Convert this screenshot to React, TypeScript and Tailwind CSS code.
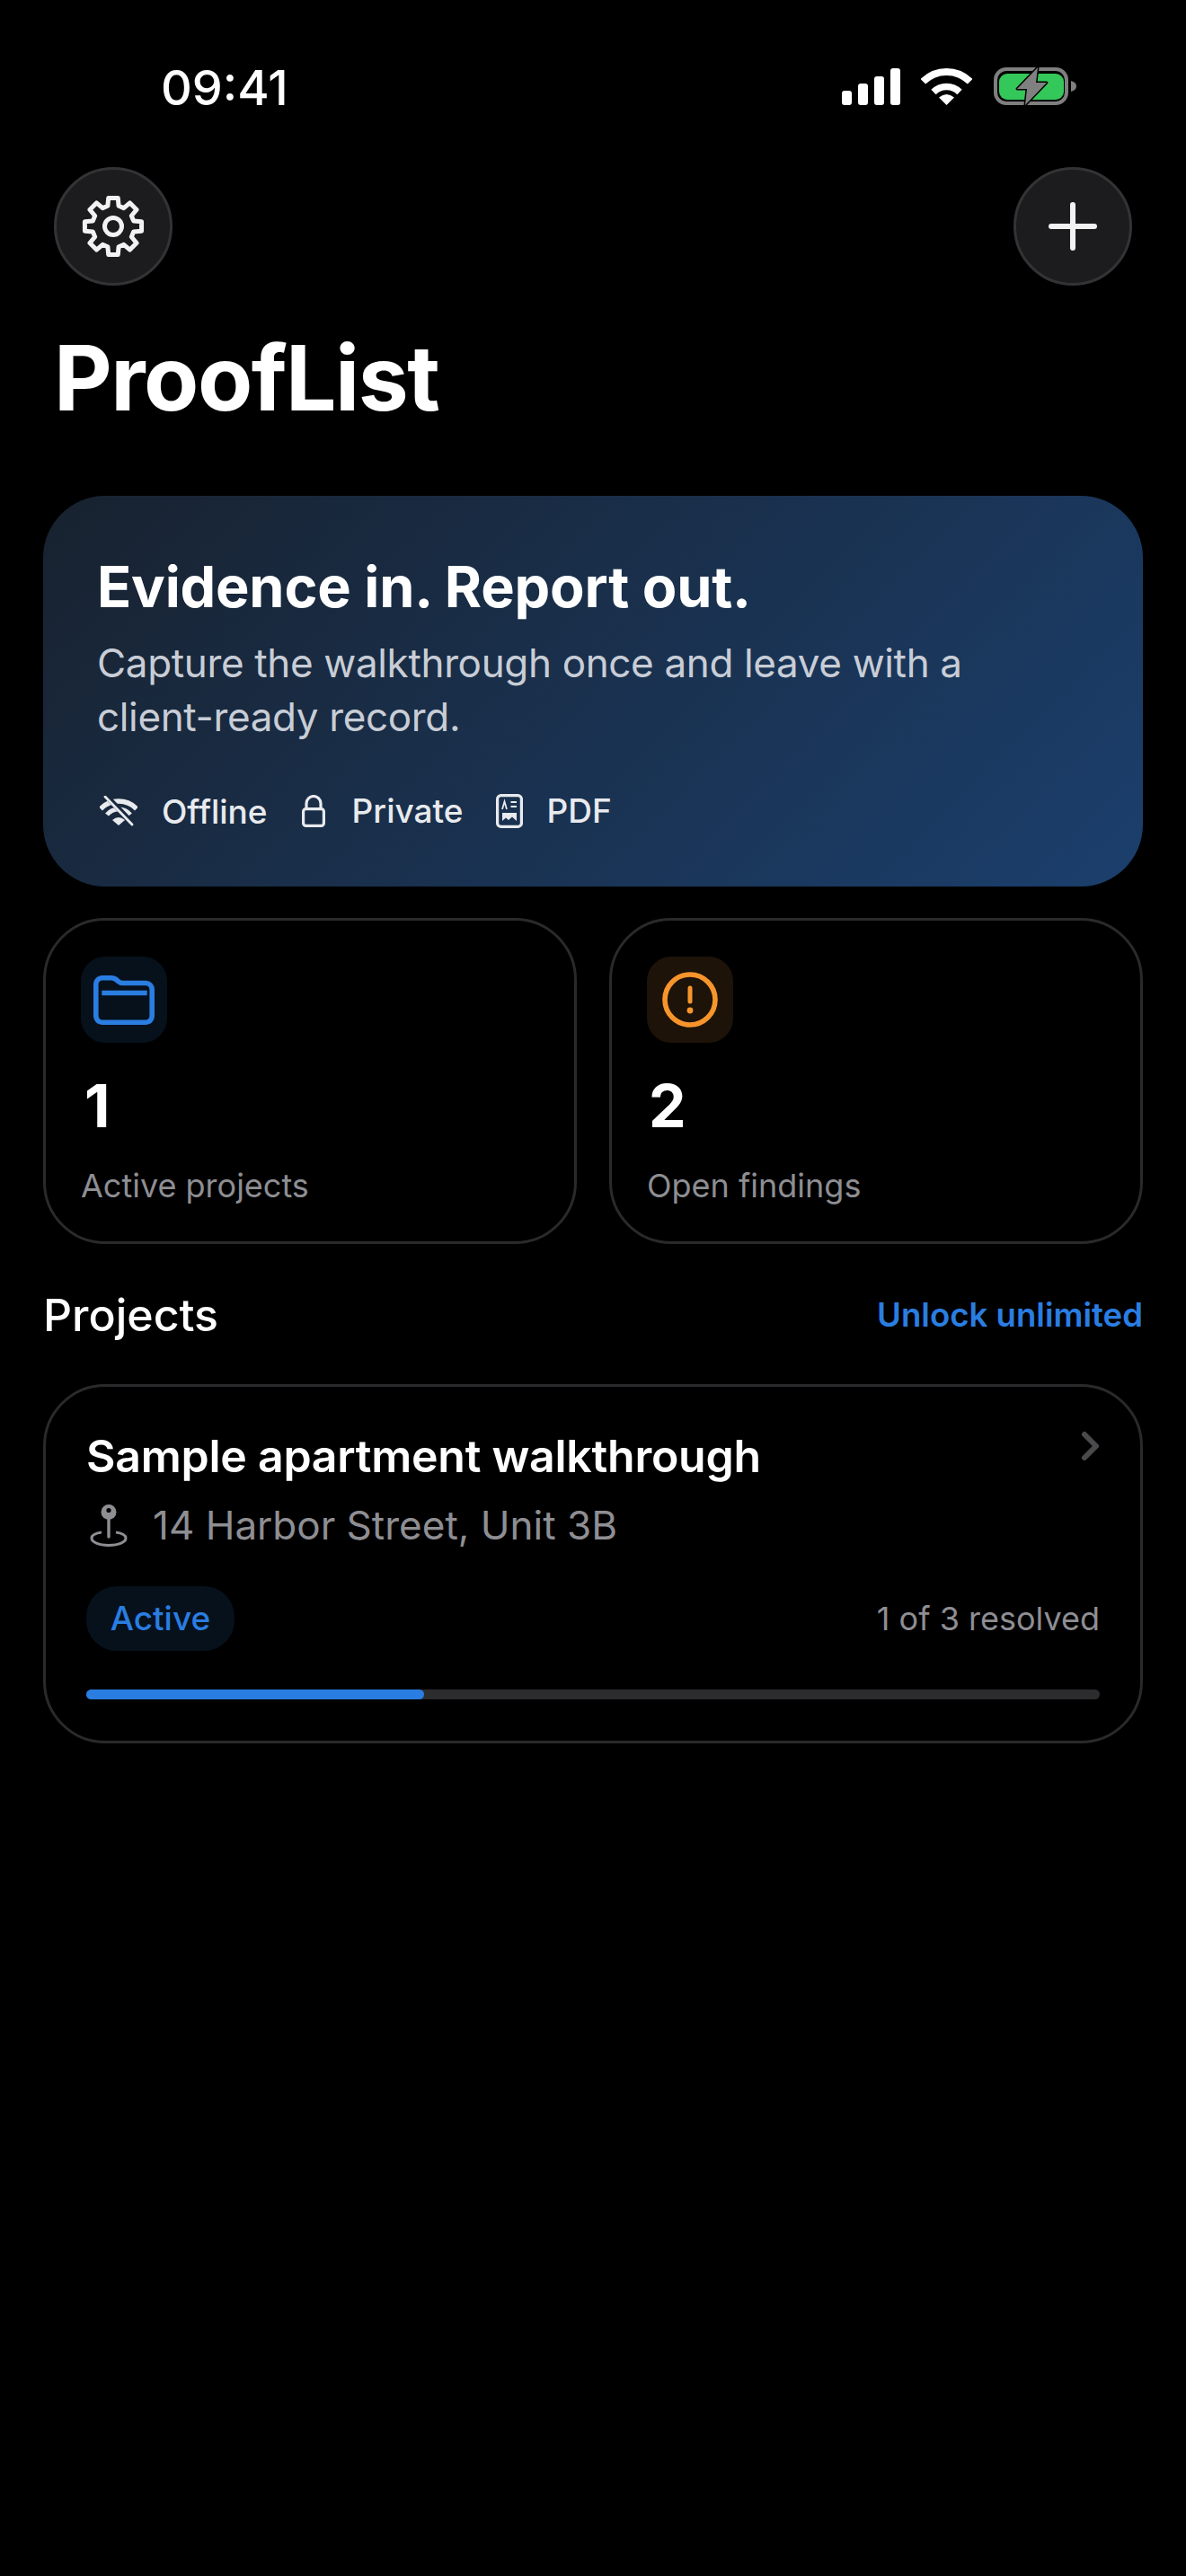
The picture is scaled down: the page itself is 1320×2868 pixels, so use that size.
import React from "react";

const font = { fontFamily: "Inter, 'Liberation Sans', sans-serif" };

function gearPath() {
  const cx = 36;
  const cy = 36;
  const pts: string[] = [];
  for (let i = 0; i < 8; i++) {
    const a = (i * Math.PI) / 4 - Math.PI / 2;
    const d = (r: number, t: number) => {
      const x = cx + r * Math.cos(a + (t * Math.PI) / 180);
      const y = cy + r * Math.sin(a + (t * Math.PI) / 180);
      return `${x.toFixed(2)} ${y.toFixed(2)}`;
    };
    pts.push(d(23.5, -15), d(32, -9.5), d(32, 9.5), d(23.5, 15));
  }
  return `M${pts.join("L")}Z`;
}

function Gear() {
  return (
    <svg width="72" height="72" viewBox="0 0 72 72" fill="none" stroke="#f2f2f2" strokeWidth="5" strokeLinejoin="round">
      <path d={gearPath()} />
      <circle cx="36" cy="36" r="9.5" />
    </svg>
  );
}

function StatusIcons() {
  return (
    <div className="flex items-center">
      <svg width="65" height="41" viewBox="0 0 65 41" fill="#fff">
        <rect x="0" y="25" width="11" height="16" rx="3" />
        <rect x="18" y="17" width="11" height="24" rx="3" />
        <rect x="36" y="9" width="11" height="32" rx="3" />
        <rect x="54" y="0" width="11" height="41" rx="3" />
      </svg>
      <svg className="ml-[23px]" width="57" height="42" viewBox="0 0 57 42" fill="none" stroke="#fff">
        <path d="M2.3 15.8A37 37 0 0 1 54.7 15.8" strokeWidth="8" />
        <path d="M14 27.5A20.5 20.5 0 0 1 43 27.5" strokeWidth="7.5" />
        <path d="M28.5 42L20 33.5Q28.5 26.5 37 33.5Z" fill="#fff" stroke="none" />
      </svg>
      <svg className="ml-[24px]" width="92" height="46" viewBox="0 -2 92 46" fill="none">
        <rect x="2" y="2" width="79" height="38" rx="12" stroke="#7f7f7f" strokeWidth="4" />
        <rect x="6" y="7" width="72" height="29" rx="9" fill="#34c759" />
        <path d="M86 15C90 16 92 18 92 21C92 24 90 26 86 27Z" fill="#7f7f7f" />
        <path d="M49 0L26 24H37L35 42L59 17H47Z" fill="#808080" stroke="#000" strokeWidth="3" strokeLinejoin="round" paintOrder="stroke" />
      </svg>
    </div>
  );
}

function WifiOff() {
  return (
    <svg width="42" height="34" viewBox="0 0 42 34" fill="none" stroke="#e8eaee">
      <path d="M1 14.5A28 28 0 0 1 41 14.5" strokeWidth="5.5" />
      <path d="M8 21A17 17 0 0 1 34 21" strokeWidth="5" />
      <path d="M21 33L14 27Q21 21 28 27Z" fill="#e8eaee" stroke="none" />
      <path d="M8 1L38 32" stroke="#192941" strokeWidth="6" />
      <path d="M6 1L36 32" strokeWidth="2.8" strokeLinecap="round" />
    </svg>
  );
}

function Lock() {
  return (
    <svg width="26" height="36" viewBox="0 0 26 36" fill="none" stroke="#e8eaee" strokeWidth="3.2">
      <rect x="1.6" y="15.6" width="22.8" height="18.8" rx="3" />
      <path d="M5 15.5V9.5A8 8 0 0 1 21 9.5V15.5" />
    </svg>
  );
}

function Doc() {
  return (
    <svg width="30" height="38" viewBox="0 0 30 38" fill="none" stroke="#e8eaee" strokeWidth="3.2">
      <rect x="1.6" y="1.6" width="26.8" height="34.8" rx="4" />
      <path d="M16.5 9H23M16.5 14H23" strokeWidth="2" />
      <path d="M7 17L9.5 8.5L12 17" strokeWidth="1.8" />
      <path d="M7 30V21H23V30L18 25.5L14 29L11 26.5Z" fill="#e8eaee" stroke="none" />
    </svg>
  );
}

function Folder() {
  return (
    <svg width="68" height="55" viewBox="0 0 68 55" fill="none" stroke="#2a7de1" strokeWidth="5.6" strokeLinejoin="round">
      <path d="M2.8 10A7 7 0 0 1 10 2.8H20C24 2.8 25 4 27.5 6.5C29 8 30 8.5 33 8.5H58A7 7 0 0 1 65.2 15.5V45A7 7 0 0 1 58 52.2H10A7 7 0 0 1 2.8 45Z" />
      <path d="M12 19.5H57" strokeWidth="5.4" strokeLinecap="square" />
    </svg>
  );
}

function Alert() {
  return (
    <svg width="62" height="62" viewBox="0 0 62 62" fill="none" stroke="#f7952c" strokeWidth="5.6">
      <circle cx="31" cy="31" r="28" />
      <path d="M31 18V33" strokeLinecap="round" strokeWidth="5" />
      <circle cx="31" cy="43" r="3.4" fill="#f7952c" stroke="none" />
    </svg>
  );
}

function Pin() {
  return (
    <svg width="42" height="47" viewBox="0 0 42 47" fill="none" stroke="#8e8e93">
      <path d="M13 31C6 32 2 34.5 2 37.5C2 42 10 45.5 21 45.5C32 45.5 40 42 40 37.5C40 34.5 36 32 29 31" strokeWidth="3" />
      <path d="M21 14V36" strokeWidth="3.4" strokeLinecap="round" />
      <circle cx="21" cy="8.5" r="8.5" fill="#8e8e93" stroke="none" />
      <circle cx="21" cy="6.5" r="2.6" fill="#000" stroke="none" />
    </svg>
  );
}

function Stat({ icon, value, label, tint, numClass }: { icon: React.ReactNode; value: string; label: string; tint: string; numClass: string }) {
  return (
    <div className="h-[363px] rounded-[69px] border-[3px] border-[#2a2a2c] pl-[39px] pt-[40px]">
      <div className={`flex h-[96px] w-[96px] items-center justify-center rounded-[27px] ${tint}`}>{icon}</div>
      <div className={`mt-[30px] text-[66px] font-bold leading-[80px] text-white ${numClass}`}>{value}</div>
      <div className="mt-[27px] text-[36px] leading-[44px] text-[#8e8e93]">{label}</div>
    </div>
  );
}

export default function App() {
  return (
    <div className="min-h-[2868px] w-[1320px] bg-black text-white" style={font}>
      <div className="flex h-[186px] items-start justify-between pl-[179px] pr-[122px] pt-[73px]">
        <div className="mt-[2px] text-[54px] font-medium leading-[46px]">09:41</div>
        <StatusIcons />
      </div>

      <div className="flex items-center justify-between px-[60px]">
        <button className="flex h-[132px] w-[132px] items-center justify-center rounded-full border-[3px] border-[#333335] bg-[#1c1c1e]">
          <Gear />
        </button>
        <button className="flex h-[132px] w-[132px] items-center justify-center rounded-full border-[3px] border-[#333335] bg-[#1c1c1e]">
          <svg width="54" height="54" viewBox="0 0 54 54" stroke="#f2f2f2" strokeWidth="6" strokeLinecap="round">
            <path d="M27 3V51M3 27H51" />
          </svg>
        </button>
      </div>

      <h1 className="ml-[60px] mt-[41px] text-[100px] font-bold leading-[124px] tracking-[-1.5px]">ProofList</h1>

      <div className="mx-[48px] mt-[69px]">
        <div className="h-[435px] rounded-[69px] bg-[linear-gradient(135deg,#18222f,#1b3f6d)] pl-[60px] pt-[63px]">
          <div className="text-[63px] font-bold leading-[76px] tracking-[-0.2px]">Evidence in. Report out.</div>
          <div className="mt-[17px] w-[1060px] text-[44px] leading-[60px] tracking-[-0.35px] text-[#c8cdd6]">
            Capture the walkthrough once and leave with a client-ready record.
          </div>
          <div className="mt-[52px] flex items-center text-[37px] font-medium leading-[44px] text-[#e8eaee]">
            <div className="ml-[3px] flex items-center gap-[27px]">
              <WifiOff />
              <span className="mt-[2px]">Offline</span>
            </div>
            <div className="ml-[38px] flex items-center gap-[30px]">
              <Lock />
              <span>Private</span>
            </div>
            <div className="ml-[37px] flex items-center gap-[26px]">
              <Doc />
              <span>PDF</span>
            </div>
          </div>
        </div>

        <div className="mt-[35px] grid grid-cols-2 gap-[36px]">
          <Stat icon={<Folder />} value="1" label="Active projects" tint="bg-[#06111c]" numClass="ml-[4px]" />
          <Stat icon={<Alert />} value="2" label="Open findings" tint="bg-[#1d1308]" numClass="ml-[2px]" />
        </div>

        <div className="mt-[50px] flex items-center justify-between">
          <h2 className="text-[50px] font-medium leading-[58px]">Projects</h2>
          <span className="text-[36.6px] font-semibold text-[#2a7de1]">Unlock unlimited</span>
        </div>

        <div className="relative mt-[48px] h-[400px] rounded-[69px] border-[3px] border-[#2a2a2c] px-[45px] pt-[46px]">
          <svg className="absolute right-[44px] top-[48px]" width="22" height="36" viewBox="0 0 22 36" fill="none" stroke="#4a4a4c" strokeWidth="6" strokeLinecap="round" strokeLinejoin="round">
            <path d="M4 5L17 18L4 31" />
          </svg>
          <div className="text-[50px] font-semibold leading-[62px] tracking-[-0.25px]">Sample apartment walkthrough</div>
          <div className="mt-[18px] flex items-center gap-[28px] pl-[4px] text-[44px] leading-[56px] text-[#8e8e93]">
            <Pin />
            <span>14 Harbor Street, Unit 3B</span>
          </div>
          <div className="mt-[40px] flex items-center justify-between">
            <div className="flex h-[72px] w-[165px] items-center justify-center rounded-[34px] bg-[#06111c] text-[37px] font-medium text-[#2a7de1]">Active</div>
            <div className="text-[36px] text-[#8e8e93]">1 of 3 resolved</div>
          </div>
          <div className="mt-[43px] h-[11px] rounded-full bg-[#2c2c2e]">
            <div className="h-full w-1/3 rounded-full bg-[#2a7de1]" />
          </div>
        </div>
      </div>
    </div>
  );
}
